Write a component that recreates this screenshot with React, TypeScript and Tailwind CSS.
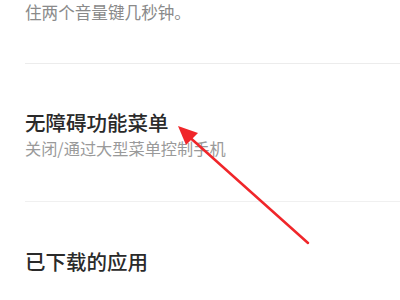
const font = { fontFamily: '"Noto Sans CJK SC", "Noto Sans", sans-serif' };

export default function App() {
  return (
    <div className="relative w-[400px] h-[300px] overflow-hidden bg-white" style={font}>
      <div className="pl-[25px]">
        <p className="text-[16.6px] leading-[24px] text-[#8a8a8a]">住两个音量键几秒钟。</p>
      </div>
      <div className="ml-[25px] mt-[39px] border-t border-[#ececec]" />

      <div className="pl-[25px] pt-[45px] pb-[42px]">
        <p className="text-[20.5px] leading-[26px] font-medium text-[#2a2a2a]">无障碍功能菜单</p>
        <p className="mt-[2px] text-[16.2px] leading-[22px] text-[#9a9a9a]">关闭/通过大型菜单控制手机</p>
      </div>
      <div className="ml-[25px] border-t border-[#f0f0f0]" />

      <div className="pl-[25px] pt-[46px]">
        <p className="text-[20.5px] leading-[26px] font-medium text-[#2a2a2a]">已下载的应用</p>
      </div>

      <svg className="absolute inset-0 pointer-events-none" width="400" height="300" viewBox="0 0 400 300">
        <line x1="308" y1="243" x2="186" y2="134" stroke="#f0262a" strokeWidth="2.5" strokeLinecap="round" />
        <polygon points="178,126 198,133 186,145" fill="#f0262a" />
      </svg>
    </div>
  );
}
